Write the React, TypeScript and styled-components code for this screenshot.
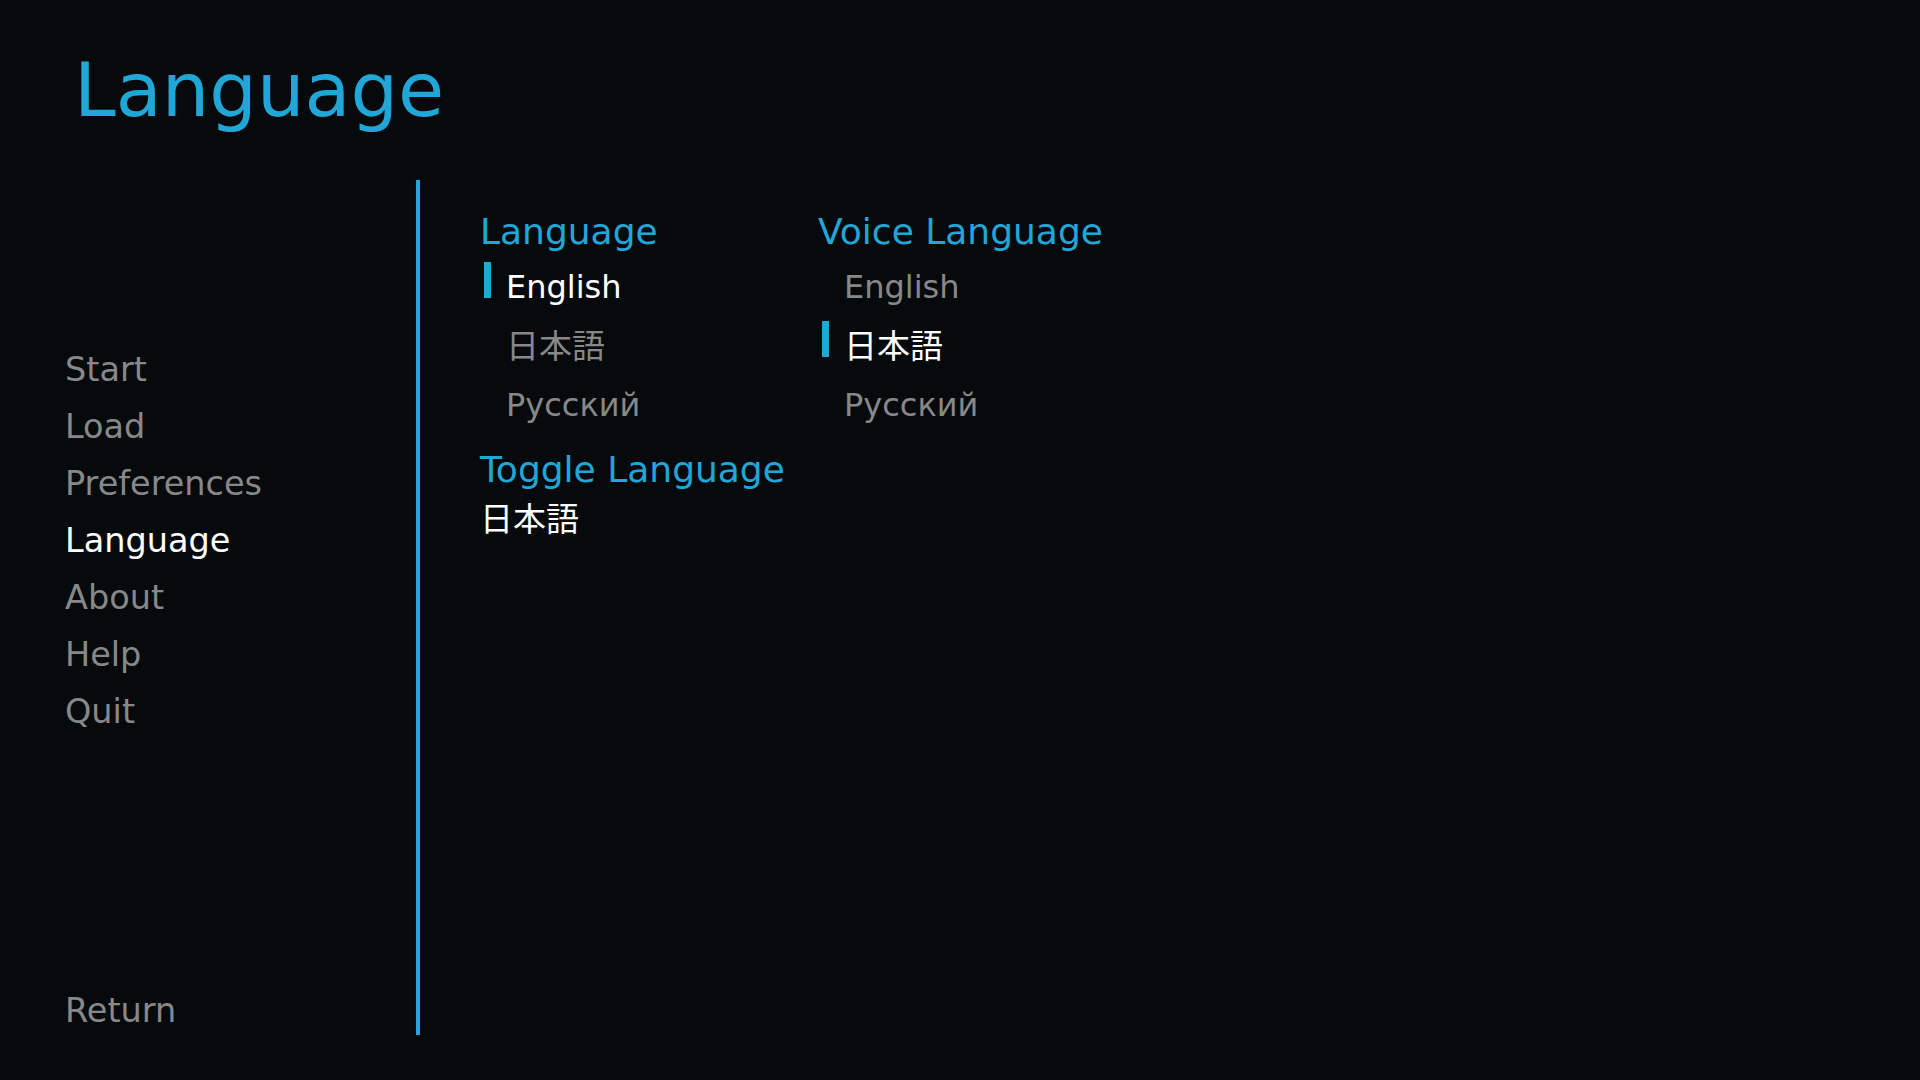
import React from 'react';
import styled, { createGlobalStyle } from 'styled-components';

const ACCENT = '#20a7d8';
const IDLE = '#888888';
const SELECTED = '#ffffff';

const GlobalStyle = createGlobalStyle`
  html, body {
    margin: 0;
    padding: 0;
    background: #060a0c;
  }
  body {
    font-family: "DejaVu Sans", "Noto Sans CJK JP", sans-serif;
  }
`;

const Screen = styled.div`
  width: 1920px;
  height: 1080px;
  background: #060a0c;
  display: grid;
  grid-template-columns: 416px 4px 1fr;
  grid-template-rows: 180px 855px 45px;
  overflow: hidden;
`;

const Header = styled.header`
  grid-column: 1 / -1;
  grid-row: 1;
  padding: 47px 0 0 74px;
`;

const Title = styled.h1`
  margin: 0;
  font-size: 75px;
  line-height: 87px;
  font-weight: normal;
  color: ${ACCENT};
`;

const Sidebar = styled.nav`
  grid-column: 1;
  grid-row: 2 / 4;
  display: flex;
  flex-direction: column;
  padding: 160.5px 0 41.5px 65px;
`;

const NavList = styled.div`
  display: flex;
  flex-direction: column;
`;

const NavItem = styled.div<{ $selected?: boolean; $bottom?: boolean }>`
  font-size: 33.5px;
  line-height: 57px;
  color: ${(p) => (p.$selected ? SELECTED : IDLE)};
  margin-top: ${(p) => (p.$bottom ? 'auto' : '0')};
  white-space: nowrap;
`;

const Divider = styled.div`
  grid-column: 2;
  grid-row: 2;
  background: ${ACCENT};
`;

const Content = styled.main`
  grid-column: 3;
  grid-row: 2;
  padding: 30.5px 0 0 60px;
  display: flex;
  flex-direction: column;
`;

const Columns = styled.div`
  display: flex;
`;

const Column = styled.div<{ $width?: number }>`
  display: flex;
  flex-direction: column;
  width: ${(p) => (p.$width ? `${p.$width}px` : 'auto')};
`;

const Label = styled.div`
  font-size: 36px;
  line-height: 42px;
  color: ${ACCENT};
  white-space: nowrap;
`;

const OptionList = styled.div`
  display: flex;
  flex-direction: column;
  margin-top: 5px;
`;

const Option = styled.div`
  display: flex;
  align-items: flex-start;
  height: 59px;
`;

const Marker = styled.span<{ $on?: boolean }>`
  flex: none;
  width: 7px;
  height: 36px;
  margin: 4.5px 15px 0 4px;
  background: ${(p) => (p.$on ? ACCENT : 'transparent')};
`;

const OptionText = styled.span<{ $on?: boolean; $cjk?: boolean }>`
  font-size: ${(p) => (p.$cjk ? '33px' : '32px')};
  line-height: 59px;
  color: ${(p) => (p.$on ? SELECTED : IDLE)};
  white-space: nowrap;
`;

const ToggleBlock = styled.div`
  display: flex;
  flex-direction: column;
  margin-top: 14px;
`;

const ToggleValue = styled.div`
  margin-top: 8px;
  font-size: 33px;
  line-height: 42px;
  color: ${SELECTED};
`;

const nav = ['Start', 'Load', 'Preferences', 'Language', 'About', 'Help', 'Quit'];
const languages = [
  { name: 'English', cjk: false },
  { name: '日本語', cjk: true },
  { name: 'Русский', cjk: false },
];

const OptionGroup: React.FC<{ label: string; selected: string; width?: number }> = ({
  label,
  selected,
  width,
}) => (
  <Column $width={width}>
    <Label>{label}</Label>
    <OptionList>
      {languages.map((l) => (
        <Option key={l.name}>
          <Marker $on={l.name === selected} />
          <OptionText $on={l.name === selected} $cjk={l.cjk}>
            {l.name}
          </OptionText>
        </Option>
      ))}
    </OptionList>
  </Column>
);

export default function App() {
  return (
    <>
      <GlobalStyle />
      <Screen>
        <Header>
          <Title>Language</Title>
        </Header>

        <Sidebar>
          <NavList>
            {nav.map((n) => (
              <NavItem key={n} $selected={n === 'Language'}>
                {n}
              </NavItem>
            ))}
          </NavList>
          <NavItem $bottom>Return</NavItem>
        </Sidebar>

        <Divider />

        <Content>
          <Columns>
            <OptionGroup label="Language" selected="English" width={338} />
            <OptionGroup label="Voice Language" selected="日本語" />
          </Columns>
          <ToggleBlock>
            <Label>Toggle Language</Label>
            <ToggleValue>日本語</ToggleValue>
          </ToggleBlock>
        </Content>
      </Screen>
    </>
  );
}
